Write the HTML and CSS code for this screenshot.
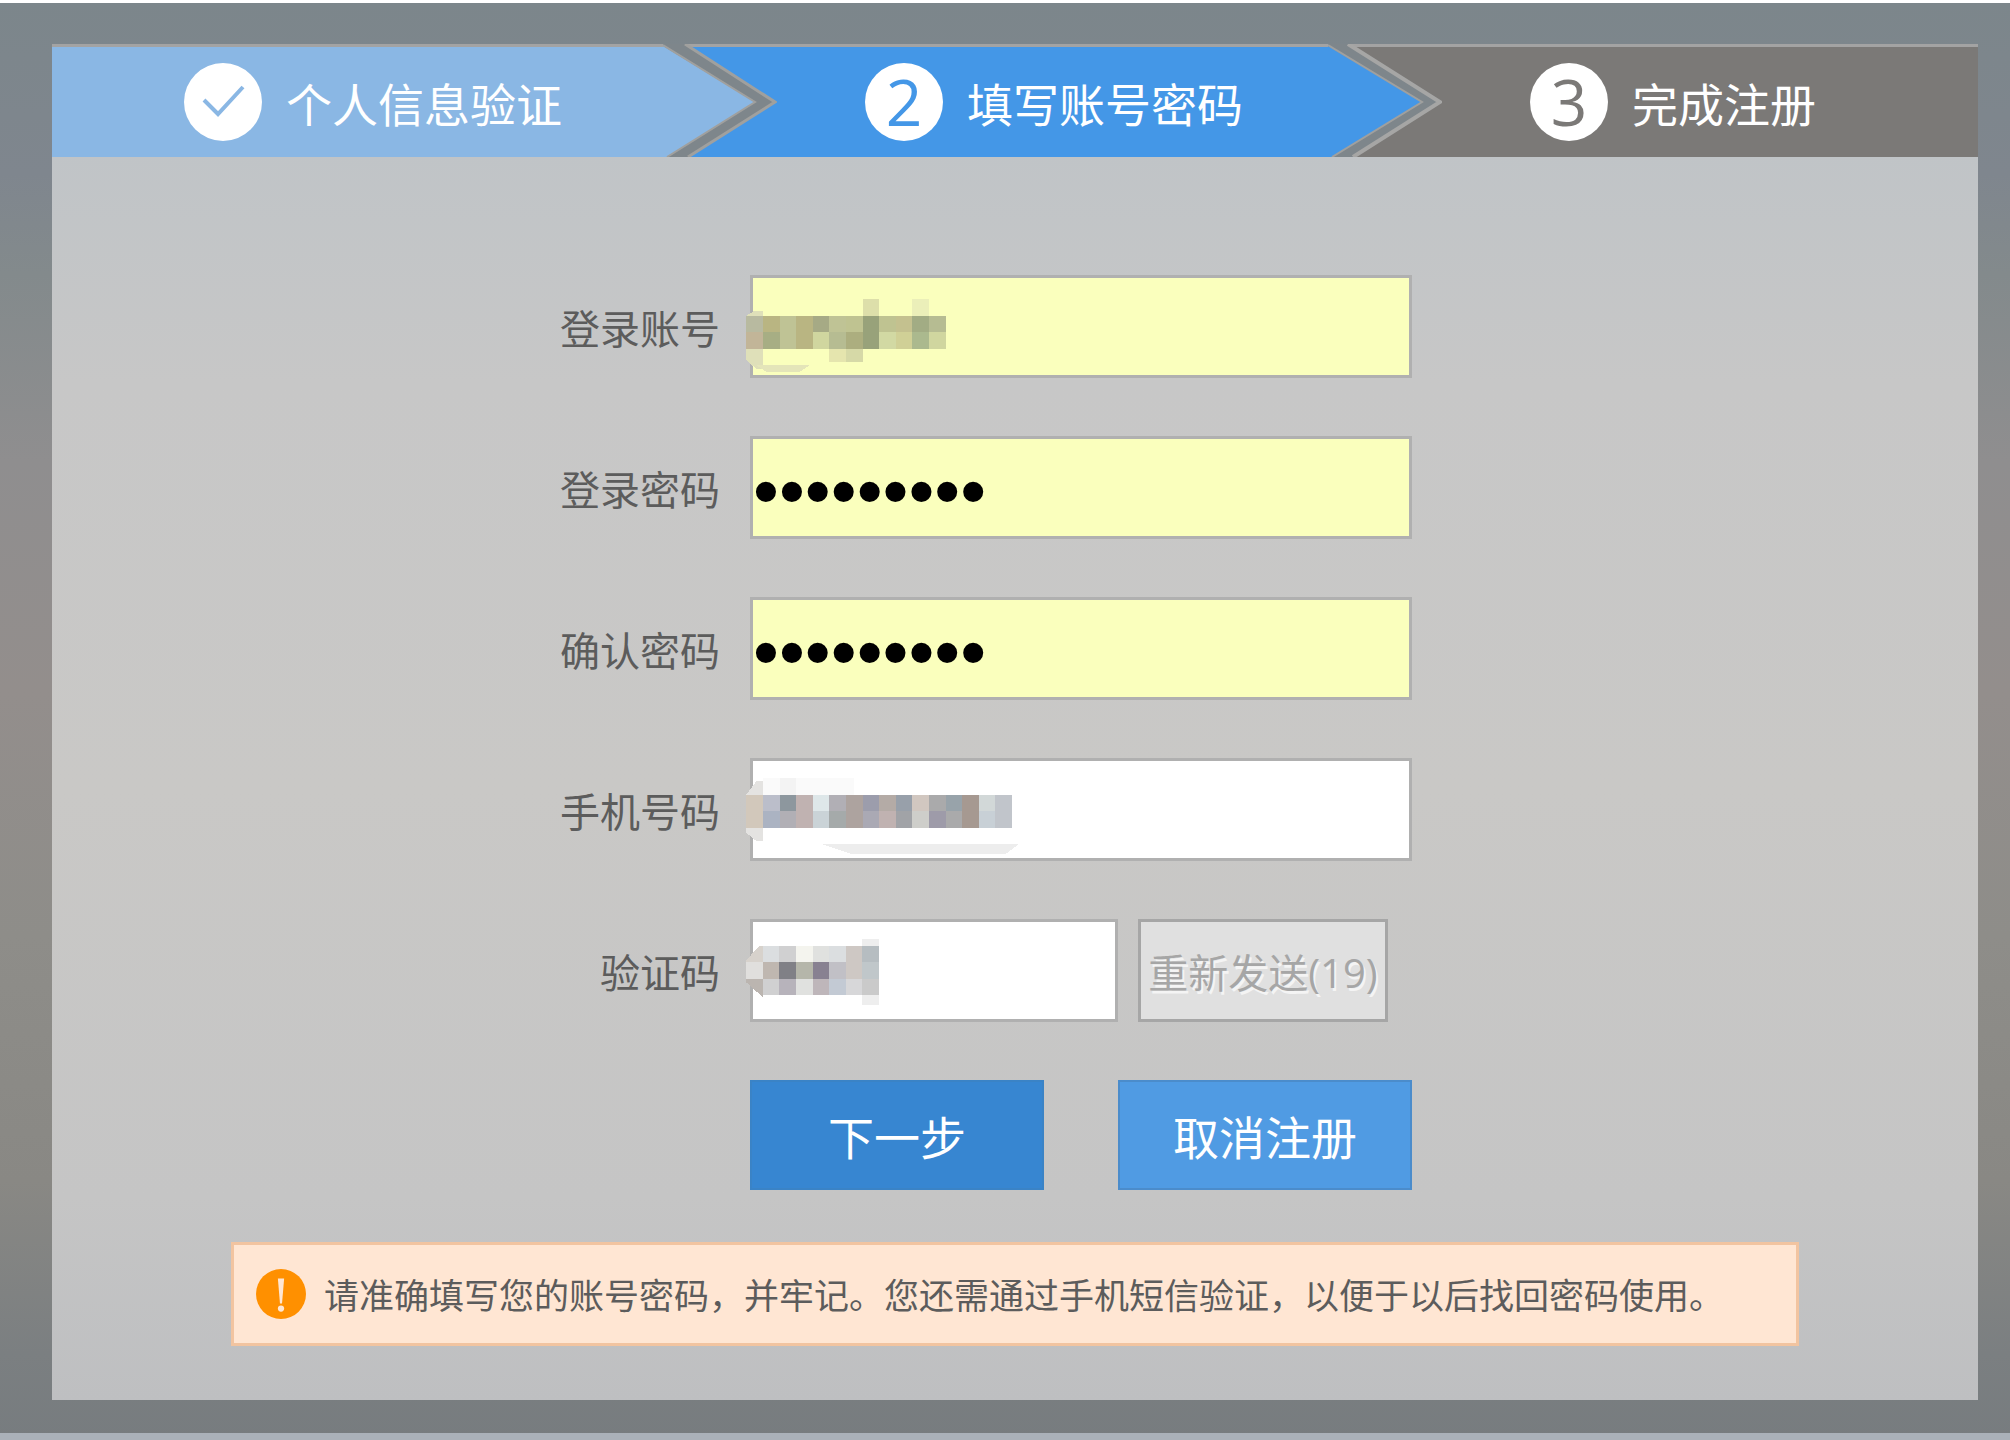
FILE: index.html
```
<!DOCTYPE html>
<html lang="zh-CN">
<head>
  <title>填写账号密码</title>
  <meta charset="UTF-8" />
  <link rel="stylesheet" href="styles.css">
</head>
<body>
  <main class="panel">
    <ol class="steps">
      <li class="step done">
        <span class="num">
          <svg viewBox="0 0 78 78" width="78" height="78" aria-hidden="true">
            <path d="M20 37 L34 51 L59 24" fill="none" stroke="#8ab7e4" stroke-width="4"/>
          </svg>
        </span>
        <span>个人信息验证</span>
      </li>
      <li class="arrow" aria-hidden="true">
        <svg viewBox="0 0 114 113" preserveAspectRatio="none">
          <rect width="114" height="113" fill="#4497e7"/>
          <rect width="114" height="3" fill="#a3a3a3"/>
          <path d="M0 0 H22 L112 58 L25 113 H0 Z" fill="#7e868b"/>
          <path d="M0 2 L92 58 L4 113 H0 Z" fill="#8ab7e4"/>
          <path d="M22 0 L112 58 L25 113" fill="none" stroke="#a0a09e" stroke-width="3"/>
          <path d="M0 1 L92 58 L4 113" fill="none" stroke="#a0a09e" stroke-width="2"/>
        </svg>
      </li>
      <li class="step current">
        <span class="num">2</span>
        <span>填写账号密码</span>
      </li>
      <li class="arrow" aria-hidden="true">
        <svg viewBox="0 0 114 113" preserveAspectRatio="none">
          <rect width="114" height="113" fill="#7b7977"/>
          <rect width="114" height="3" fill="#a3a3a3"/>
          <path d="M0 0 H20 L112 58 L25 113 H0 Z" fill="#7e868b"/>
          <path d="M0 2 L94 58 L4 113 H0 Z" fill="#4497e7"/>
          <path d="M20 0 L112 58 L25 113" fill="none" stroke="#a6a6a5" stroke-width="4"/>
          <path d="M0 1 L94 58 L4 113" fill="none" stroke="#a0a09e" stroke-width="2"/>
        </svg>
      </li>
      <li class="step todo">
        <span class="num">3</span>
        <span>完成注册</span>
      </li>
    </ol>

    <form class="form">
      <div class="row">
        <label for="account">登录账号</label>
        <div class="field">
          <input id="account" class="filled" type="text">
          <svg class="mosaic" viewBox="0 0 12 5" width="200" height="83" shape-rendering="crispEdges" aria-hidden="true">
            <path d="M0 1 L.5 .7 H1 V1 Z M0 3 H1 V4.2 H.6 L0 3.7 Z" fill="#dfe0b9"/>
            <path d="M.6 4 H3.8 L3.2 4.4 H1.2 Z" fill="#e4e5b9"/>
            <path d="M0 1h1v1H0z" fill="#b8baa0"/><path d="M0 2h1v1H0z" fill="#c2b598"/>
            <path d="M1 1h1v1H1z M3 1h1v2H3z" fill="#b9b582"/><path d="M1 2h1v1H1z" fill="#a7ae84"/>
            <path d="M2 1h1v2H2z M5 1h1v1H5z" fill="#bfc395"/><path d="M4 1h1v1H4z" fill="#a6aa85"/>
            <path d="M4 2h1v1H4z M11 2h1v1h-1z" fill="#d0d69f"/>
            <path d="M5 2h1v1H5z M11 1h1v1h-1z" fill="#b6bc92"/>
            <path d="M6 1h1v1H6z M8 1h1v1H8z" fill="#bfc391"/><path d="M6 2h1v1H6z" fill="#acae7f"/>
            <path d="M7 1h1v2H7z" fill="#98a27a"/><path d="M9 1h1v1H9z" fill="#c4c18f"/>
            <path d="M8 2h1v1H8z" fill="#d2d9a3"/><path d="M9 2h1v1H9z" fill="#d0d096"/>
            <path d="M10 1h1v1h-1z" fill="#a2ac84"/><path d="M10 2h1v1h-1z" fill="#abb98e"/>
            <path d="M7 0h1v1H7z" fill="#dddfaa"/><path d="M10 0h1v1h-1z" fill="#ebefb9"/>
            <path d="M5 3h1v.8H5z" fill="#e5e5ae"/><path d="M6 3h1v.8H6z" fill="#d6d9a7"/>
          </svg>
        </div>
      </div>
      <div class="row">
        <label for="password">登录密码</label>
        <div class="field"><input id="password" class="filled" type="password" value="123456789"></div>
      </div>
      <div class="row">
        <label for="confirm">确认密码</label>
        <div class="field"><input id="confirm" class="filled" type="password" value="123456789"></div>
      </div>
      <div class="row">
        <label for="phone">手机号码</label>
        <div class="field">
          <input id="phone" type="tel">
          <svg class="mosaic raised" viewBox="0 0 17 5" width="283" height="83" shape-rendering="crispEdges" aria-hidden="true">
            <path d="M0 1 L.6 .2 H1 V1 Z M0 3 H1 V3.8 H.6 L0 3.3 Z" fill="#e4e3e1"/>
            <path d="M2 0h1v1H2z" fill="#f3f3f3"/><path d="M1 0h1v1H1z M3 0h3.5v1H3z" fill="#fafafa"/>
            <path d="M4.6 4 H16.4 L15.6 4.6 H6.4 Z" fill="#ededed"/>
            <path d="M0 1h1v2H0z" fill="#d2c8bb"/><path d="M1 1h1v1H1z" fill="#bbbeca"/><path d="M1 2h1v1H1z" fill="#abb3c2"/>
            <path d="M2 1h1v1H2z" fill="#8d979e"/><path d="M2 2h1v1H2z M5 1h1v1H5z" fill="#b1afb5"/>
            <path d="M3 1h1v2H3z M8 2h1v1H8z" fill="#c0b2b1"/><path d="M4 1h1v1H4z" fill="#dee7e9"/>
            <path d="M4 2h1v1H4z" fill="#cad3d7"/><path d="M5 2h1v1H5z" fill="#a5aaaa"/>
            <path d="M6 1h1v2H6z" fill="#ada39f"/><path d="M7 1h1v1H7z" fill="#9c9dac"/><path d="M7 2h1v1H7z" fill="#aaa9b4"/>
            <path d="M8 1h1v1H8z" fill="#b4aba6"/><path d="M9 1h1v1H9z" fill="#98a0aa"/><path d="M9 2h1v1H9z" fill="#a1a3a7"/>
            <path d="M10 1h1v1h-1z" fill="#d1c7c0"/><path d="M10 2h1v1h-1z" fill="#cececa"/>
            <path d="M11 1h1v1h-1z M12 2h1v1h-1z" fill="#aaaaab"/><path d="M11 2h1v1h-1z" fill="#9e9ba9"/>
            <path d="M12 1h1v1h-1z" fill="#98a3aa"/><path d="M13 1h1v2h-1z" fill="#a69991"/>
            <path d="M14 1h1v1h-1z" fill="#d2d8d8"/><path d="M14 2h1v1h-1z" fill="#c8d0d6"/><path d="M15 1h1v2h-1z" fill="#c1c5cb"/>
          </svg>
        </div>
      </div>
      <div class="row">
        <label for="code">验证码</label>
        <div class="field code">
          <input id="code" type="text">
          <button class="resend" type="button" disabled>重新发送(19)</button>
          <svg class="mosaic raised" viewBox="0 0 8 5" width="133" height="83" shape-rendering="crispEdges" aria-hidden="true">
            <path d="M0 1.3 L.8 .4 H1 V1.4 H0 Z" fill="#d7d2cc"/><path d="M0 1.4h1v1H0z" fill="#e0dfdd"/>
            <path d="M0 2.4 H1 V3.5 L0 2.6 Z" fill="#bbb5b0"/>
            <path d="M1 .4h1v1H1z M5 .4h1v1H5z" fill="#dbdee0"/><path d="M2 .4h1v1H2z M1 2.4h1v1H1z" fill="#d0d0d1"/>
            <path d="M3 .4h1v1H3z" fill="#f4f4ee"/><path d="M4 .4h1v1H4z M3 2.4h1v1H3z" fill="#e0e1df"/>
            <path d="M6 .4h1v2H6z" fill="#cec8c4"/><path d="M7 .4h1v1H7z" fill="#b6bdc1"/><path d="M7 1.4h1v1H7z" fill="#c0c7ca"/>
            <path d="M1 1.4h1v1H1z" fill="#bfb7b0"/><path d="M2 1.4h1v1H2z" fill="#808086"/><path d="M3 1.4h1v1H3z" fill="#b5b6aa"/>
            <path d="M4 1.4h1v1H4z" fill="#888191"/><path d="M5 1.4h1v1H5z" fill="#c1c0c6"/>
            <path d="M2 2.4h1v1H2z" fill="#b7b3bb"/><path d="M4 2.4h1v1H4z" fill="#beb6ba"/><path d="M5 2.4h1v1H5z" fill="#c3cad4"/>
            <path d="M6 2.4h1v1H6z" fill="#d7d7d9"/><path d="M7 2.4h1v1H7z" fill="#cacaca"/><path d="M7 0h1v.4H7z M7 3.4h1V4H7z" fill="#eee"/>
          </svg>
        </div>
      </div>
      <div class="row">
        <div class="field actions">
          <button class="btn next" type="submit">下一步</button>
          <button class="btn cancel" type="button">取消注册</button>
        </div>
      </div>
    </form>

    <p class="notice">
      <svg viewBox="0 0 48 48" width="50" height="50" aria-hidden="true">
        <circle cx="24" cy="24" r="24" fill="#ff9000"/>
        <path d="M21 9 H27 L25 33 H23 Z" fill="#ffe6d3"/>
        <circle cx="24" cy="38" r="3" fill="#ffe6d3"/>
      </svg>
      <span>请准确填写您的账号密码，并牢记。您还需通过手机短信验证，以便于以后找回密码使用。</span>
    </p>
  </main>
</body>
</html>
```
FILE: styles.css
```
* {
  box-sizing: border-box;
}

body {
  margin: 0;
  min-height: 100vh;
  padding: 41px 32px 32px 52px;
  border-top: 3px solid #fff;
  border-bottom: 7px solid #aab1b9;
  background: linear-gradient(#7c868b, #7f868e 12%, #838a8c 19%, #8f8e8f 32%, #938e8c 48%, #8e8d89 65%, #898884 82%, #7b7f81 94%, #777c7f);
  font-family: "Noto Sans CJK SC", sans-serif;
  color: #5c5c5c;
}

button, input {
  font-family: inherit;
}

.panel {
  background: linear-gradient(#c0c4c7 8%, #c7c7c7 25%, #c9c8c6 55%, #c5c5c5 85%, #bebfc1);
  padding-bottom: 54px;
}

/* Step bar */
.steps {
  display: grid;
  grid-template-columns: 611fr 114px 551fr 114px 536fr;
  height: 113px;
  margin: 0;
  padding: 0;
  list-style: none;
}

.step {
  display: flex;
  align-items: center;
  gap: 24px;
  padding-left: 88px;
  border-top: 3px solid #a3a3a3;
  color: #fff;
  font-size: 46px;
  line-height: 64px;
  white-space: nowrap;
}

.done {
  background: #8ab7e4;
  padding-left: 132px;
}

.current {
  background: #4497e7;
}

.todo {
  background: #7b7977;
}

.num {
  display: flex;
  align-items: center;
  justify-content: center;
  width: 78px;
  height: 78px;
  border-radius: 50%;
  background: #fff;
  font-family: "Open Sans", sans-serif;
  font-size: 64px;
}

.current .num {
  color: #4497e7;
}

.todo .num {
  color: #7b7977;
}

.arrow svg {
  display: block;
  width: 100%;
  height: 100%;
}

/* Form */
.form {
  display: grid;
  gap: 58px;
  padding-top: 118px;
}

.row {
  display: grid;
  grid-template-columns: 668fr 662fr 536fr;
  column-gap: 30px;
  align-items: center;
}

.row label {
  text-align: right;
  font-size: 40px;
  line-height: 58px;
}

.field {
  position: relative;
  grid-column: 2;
  display: flex;
}

.field input {
  width: 100%;
  height: 103px;
  padding: 0 2px;
  border: 3px solid #b0b0b0;
  border-radius: 0;
  background: #fff;
  font-size: 40px;
}

.field .filled {
  background: #faffbd;
}

.field input[type="password"] {
  padding: 8px 0 0;
  font-family: "Liberation Sans", sans-serif;
  font-size: 74px;
  color: #000;
}

/* Pixelated block hiding the typed value */
.mosaic {
  position: absolute;
  top: 24px;
  left: -4px;
  pointer-events: none;
}

.raised {
  top: 20px;
}

.code {
  gap: 20px;
}

.code input {
  width: 368px;
}

.resend {
  width: 250px;
  padding: 0;
  border: 3px solid #a6a6a6;
  background: #e0e0e0;
  color: #a6a6a6;
  text-shadow: 2px 3px 0 #f4f4f4;
  font-family: "Open Sans", "Noto Sans CJK SC", sans-serif;
  font-size: 40px;
}

.actions {
  justify-content: space-between;
}

.btn {
  width: 294px;
  height: 110px;
  padding: 0;
  border: 2px solid #4b8ccb;
  background: #509be3;
  color: #fff;
  font-size: 46px;
}

.next {
  border-color: #3a83c6;
  background: #3786d1;
}

/* Notice */
.notice {
  display: flex;
  align-items: center;
  gap: 18px;
  min-height: 104px;
  margin: 52px 179px 0;
  padding: 0 22px;
  border: 3px solid #f2c4a0;
  background: #ffe6d3;
  font-size: 35px;
  line-height: 50px;
}
```
